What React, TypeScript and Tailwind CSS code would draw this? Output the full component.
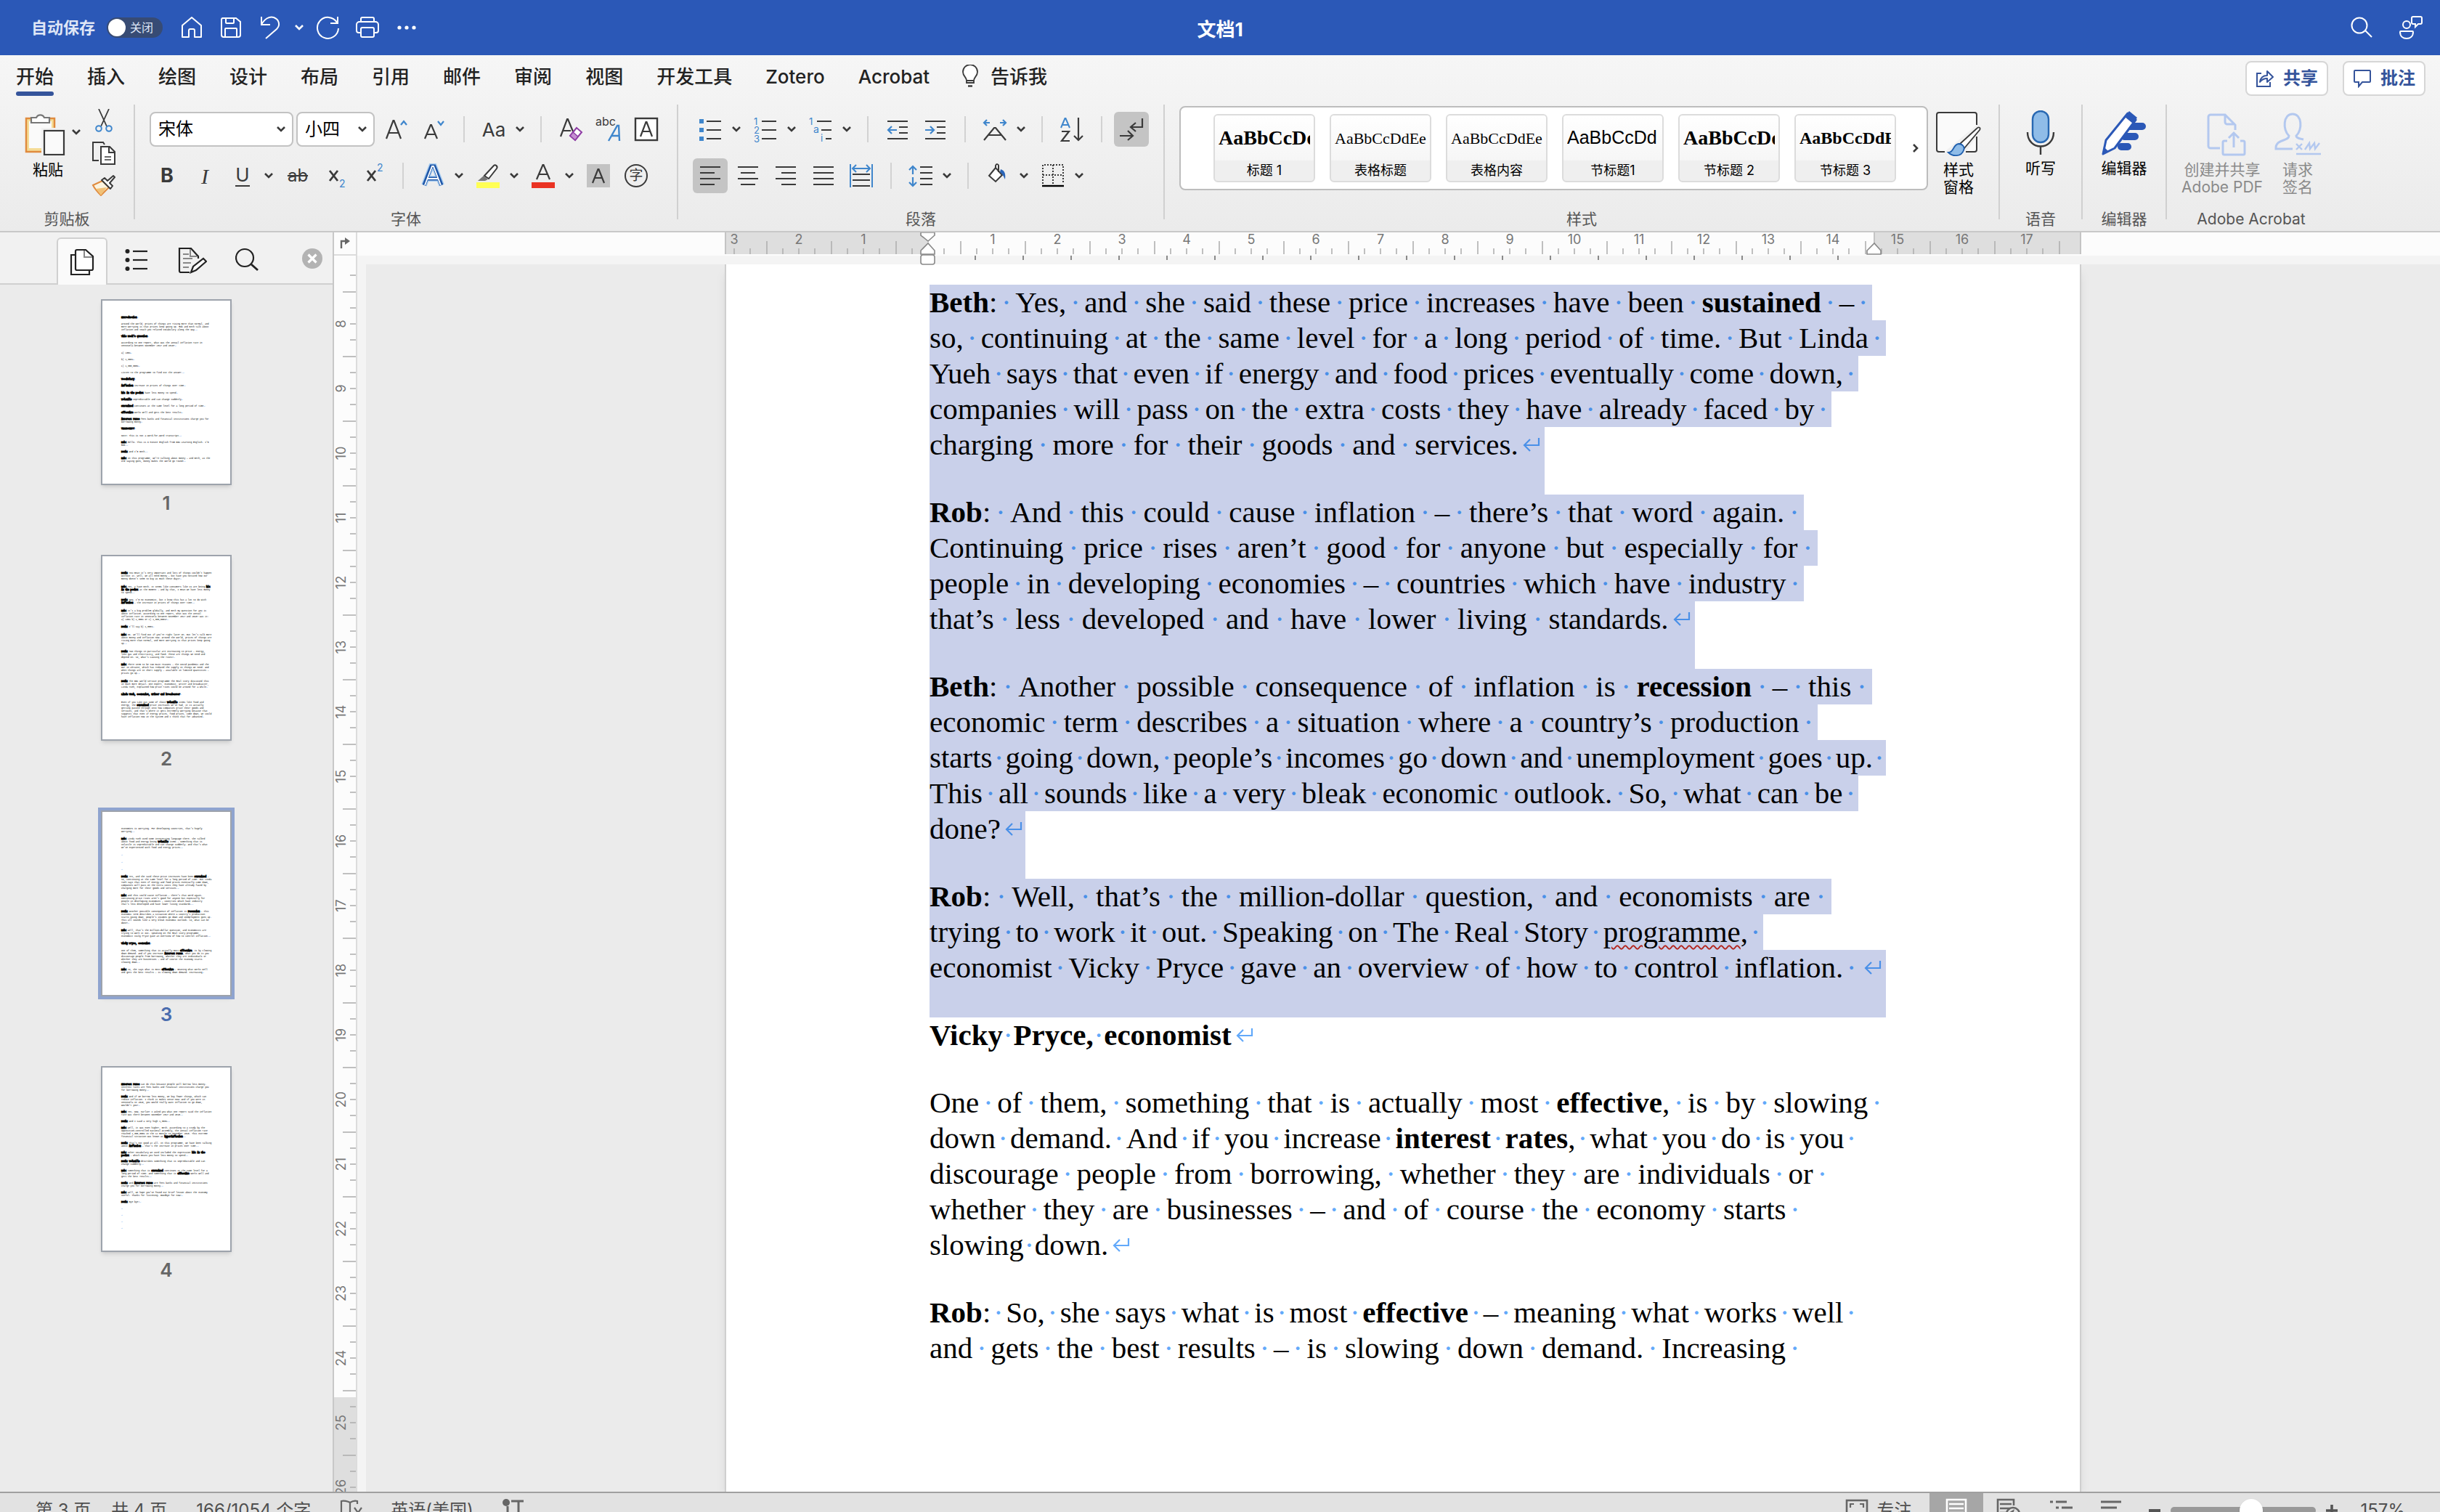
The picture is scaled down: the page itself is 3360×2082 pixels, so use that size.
import React, { ReactNode, useState } from "react";

const INK = "#3a3a3a";
const BLUE = "#3f86cc";

const Svg = ({ w, h, children }: { w: number; h: number; children: ReactNode }) => (
    <svg width={w} height={h} viewBox={`0 0 ${w} ${h}`} fill="none" className="shrink-0" aria-hidden="true">
        {children}
    </svg>
);

const Chevron = ({ color = INK }: { color?: string }) => (
    <Svg w={14} h={10}>
        <path d="M2 2l5 5 5-5" stroke={color} strokeWidth="2.6" />
    </Svg>
);

const Btn = ({ label, on = false, children }: { label: string; on?: boolean; children: ReactNode }) => (
    <div className="flex h-12 w-[52px] items-center justify-center">
        <button
            aria-label={label}
            className={
                on
                    ? "flex h-12 w-12 items-center justify-center rounded-md bg-[#c4c4c4]"
                    : "flex h-12 w-12 items-center justify-center"
            }
        >
            {children}
        </button>
    </div>
);

const Drop = ({ label }: { label: string }) => (
    <button aria-label={label} className="flex h-12 w-6 items-center pl-[3px]">
        <Chevron />
    </button>
);

const Sep = () => (
    <div className="flex h-12 w-[30px] items-center justify-center">
        <div className="h-9 w-0.5 bg-[#d2d2d2]" />
    </div>
);

const Divider = () => <div className="h-[158px] w-0.5 shrink-0 bg-[#d0d0d0]" />;

const Group = ({ name, className, children }: { name: string; className: string; children: ReactNode }) => (
    <section className={`flex shrink-0 flex-col ${className}`}>
        <div className="h-36">{children}</div>
        <div className="pt-0.5 text-center text-[21px] leading-6 text-[#555]">{name}</div>
    </section>
);

/* lines of different length, used by the alignment buttons */
const Bars = ({ rows }: { rows: [number, number][] }) => (
    <Svg w={28} h={36}>
        {rows.map(([x, w], i) => (
            <rect key={i} x={x} y={5 + i * 8} width={w} height="2" fill={INK} />
        ))}
    </Svg>
);

const TitleBar = () => (
    <header className="flex h-[76px] shrink-0 items-center bg-[#2b58b7] text-white">
        <div className="flex flex-1 items-center">
            <span className="ml-[43px] text-[22px] font-bold text-[#dfe6f6]">自动保存</span>
            <button
                role="switch"
                aria-checked="false"
                aria-label="自动保存"
                className="mr-[13px] ml-4 flex h-7 w-[77px] items-center gap-1.5 rounded-full bg-[#374b74] pl-0.5 text-base leading-7 text-[#dfe6f6]"
            >
                <span className="h-6 w-6 rounded-full bg-white" />
                关闭
            </button>
            <button aria-label="主页" className="flex w-[54px] justify-center">
                <Svg w={32} h={34}>
                    <path d="M3 14L16 3l13 11v16h-9v-9a2 2 0 0 0-2-2h-4a2 2 0 0 0-2 2v9H3z" stroke="#fff" strokeWidth="2" strokeLinejoin="round" />
                </Svg>
            </button>
            <button aria-label="保存" className="flex w-[54px] justify-center">
                <Svg w={32} h={32}>
                    <path d="M4 3h19l6 5v18a3 3 0 0 1-3 3H6a3 3 0 0 1-3-3V5a2 2 0 0 1 2-2zM9 3v6a1 1 0 0 0 1 1h9a1 1 0 0 0 1-1V3M8 29V18a1 1 0 0 1 1-1h14a1 1 0 0 1 1 1v11" stroke="#fff" strokeWidth="2" />
                </Svg>
            </button>
            <button aria-label="撤消" className="flex w-[54px] justify-center">
                <Svg w={32} h={34}>
                    <path d="M4 2v11h12M4 13C8 5 15 1 21 3c8 3 9 11 4 16L10 32" stroke="#fff" strokeWidth="2" />
                </Svg>
            </button>
            <button aria-label="撤消列表" className="flex w-[26px] justify-center">
                <Chevron color="#fff" />
            </button>
            <button aria-label="重复" className="flex w-[54px] justify-center">
                <Svg w={34} h={34}>
                    <path d="M30 2v9h-10M29 10A14.500 14.500 0 1 0 31 18" stroke="#fff" strokeWidth="2" />
                </Svg>
            </button>
            <button aria-label="打印" className="flex w-[54px] justify-center">
                <Svg w={34} h={32}>
                    <path d="M8 8V4a2 2 0 0 1 2-2h14a2 2 0 0 1 2 2v4M8 23H5a3 3 0 0 1-3-3v-8a4 4 0 0 1 4-4h22a4 4 0 0 1 4 4v8a3 3 0 0 1-3 3h-3M10 16h14a2 2 0 0 1 2 2v9a2 2 0 0 1-2 2H10a2 2 0 0 1-2-2v-9a2 2 0 0 1 2-2z" stroke="#fff" strokeWidth="2" />
                </Svg>
            </button>
            <button aria-label="更多" className="flex w-[54px] justify-center">
                <Svg w={28} h={8}>
                    <circle cx="4" cy="4" r="2.600" fill="#fff" />
                    <circle cx="14" cy="4" r="2.600" fill="#fff" />
                    <circle cx="24" cy="4" r="2.600" fill="#fff" />
                </Svg>
            </button>
        </div>
        <h1 className="pt-1 text-[26px] font-bold">文档1</h1>
        <div className="flex flex-1 items-center justify-end">
            <button aria-label="搜索" className="flex w-[68px] justify-center">
                <Svg w={30} h={30}>
                    <circle cx="12" cy="12" r="10.500" stroke="#fff" strokeWidth="2" />
                    <path d="M20 19l9 9" stroke="#fff" strokeWidth="2" />
                </Svg>
            </button>
            <button aria-label="状态" className="mr-1.5 flex w-[68px] justify-center">
                <Svg w={34} h={34}>
                    <circle cx="11" cy="13" r="5" stroke="#fff" strokeWidth="2" />
                    <path d="M3 22h16a1 1 0 0 1 1 1c0 6-4 9-9 9s-9-3-9-9a1 1 0 0 1 1-1zM20 2h10a2 2 0 0 1 2 2v6a2 2 0 0 1-2 2h-3l-4 4v-4h-3a2 2 0 0 1-2-2V4a2 2 0 0 1 2-2z" stroke="#fff" strokeWidth="2" />
                </Svg>
            </button>
        </div>
    </header>
);

const TABS = ["开始", "插入", "绘图", "设计", "布局", "引用", "邮件", "审阅", "视图", "开发工具", "Zotero", "Acrobat"];

const Tabs = () => {
    const [active, setActive] = useState("开始");
    return (
        <nav className="flex h-14 items-end pr-5 pl-[22px]">
            <div className="flex h-14 gap-[46px]">
                {TABS.map((tab) => (
                    <button key={tab} onClick={() => setActive(tab)} className="flex flex-col pt-2 text-[26px] font-medium text-[#222]">
                        <span className="flex flex-1 items-center">{tab}</span>
                        <span className={tab === active ? "h-1.5 w-full rounded-full bg-[#35549b]" : "h-1.5 w-full"} />
                    </button>
                ))}
            </div>
            <button className="ml-11 flex h-14 items-center gap-4 pt-0.5 text-[26px] font-medium text-[#222]">
                <Svg w={24} h={32}>
                    <path d="M7 22c0-5-5-6-5-12a10 10 0 0 1 20 0c0 6-5 7-5 12v3H7zM7 22h10" fill="#fff" stroke={INK} strokeWidth="1.800" />
                    <path d="M9 29.500h6" stroke={INK} strokeWidth="2.400" />
                </Svg>
                告诉我
            </button>
            <div className="ml-auto flex gap-5">
                <button className="flex h-12 w-[114px] items-center justify-center gap-3 rounded-lg border-2 border-[#d6d6d6] bg-white text-2xl font-bold text-[#35549b]">
                    <Svg w={26} h={26}>
                        <path d="M8 6H2v18h18v-6" stroke="#35549b" strokeWidth="2" />
                        <path d="M6 18c1-7 5-9 10-9V3l8 8-8 7v-5c-4 0-7 1-10 5z" stroke="#35549b" strokeWidth="2" strokeLinejoin="round" />
                    </Svg>
                    共享
                </button>
                <button className="flex h-12 w-[114px] items-center justify-center gap-3 rounded-lg border-2 border-[#d6d6d6] bg-white text-2xl font-bold text-[#35549b]">
                    <Svg w={26} h={26}>
                        <path d="M3 2h20a1 1 0 0 1 1 1v14a1 1 0 0 1-1 1H13l-5 6v-6H3a1 1 0 0 1-1-1V3a1 1 0 0 1 1-1z" stroke="#35549b" strokeWidth="2" />
                    </Svg>
                    批注
                </button>
            </div>
        </nav>
    );
};

const ClipboardGroup = () => (
    <Group name="剪贴板" className="w-[184px]">
        <div className="flex pt-1.5 pl-[34px]">
            <button className="flex w-16 flex-col items-center gap-1 pt-1 text-[21px] leading-8 text-black">
                <span className="w-full">
                    <Svg w={56} h={60}>
                        <rect x="2" y="9" width="39" height="46" fill="#f5dc96" stroke="#e08b3e" strokeWidth="2.500" />
                        <rect x="6" y="13" width="31" height="37" fill="#fafafa" />
                        <path d="M9 15V8h7a6 6 0 0 1 11 0h7v7z" fill="#fff" stroke="#777" strokeWidth="2.200" />
                        <rect x="23" y="22" width="32" height="38" fill="#f2f2f2" />
                        <rect x="27" y="26" width="27" height="33" fill="#fafafa" stroke={INK} strokeWidth="2.200" />
                    </Svg>
                </span>
                粘贴
            </button>
            <button aria-label="粘贴选项" className="flex h-16 w-7 items-center">
                <Chevron />
            </button>
            <div className="flex flex-col items-center gap-3">
                <button aria-label="剪切">
                    <Svg w={32} h={32}>
                        <path d="M9 0l11 24M23 0L12 24" stroke={INK} strokeWidth="1.800" />
                        <circle cx="9" cy="27" r="3.800" stroke={BLUE} strokeWidth="2" />
                        <circle cx="23" cy="27" r="3.800" stroke={BLUE} strokeWidth="2" />
                    </Svg>
                </button>
                <button aria-label="复制">
                    <Svg w={34} h={34}>
                        <path d="M10 27H2V2h14l2 3" stroke={INK} strokeWidth="2" />
                        <path d="M13 8h12l7 7v17H13zM24 8v8h8" fill="#fff" stroke={INK} strokeWidth="2" />
                        <path d="M18 22h9M18 26h9" stroke={INK} strokeWidth="1.600" />
                    </Svg>
                </button>
                <button aria-label="格式刷">
                    <Svg w={34} h={30}>
                        <path d="M2 15l13-6 9 9-11 11c-3-3-8-8-11-14z" fill="#fbf3df" stroke="#e08b3e" strokeWidth="2" />
                        <path d="M6 20l15-2-8 11z" fill="#f1c177" />
                        <path d="M14 8l4-3 4 4 8-7 2 2-7 8 4 4-3 4z" fill="#fff" stroke={INK} strokeWidth="2" strokeLinejoin="round" />
                    </Svg>
                </button>
            </div>
        </div>
    </Group>
);

const Combo = ({ label, value, className }: { label: string; value: string; className: string }) => (
    <div className={`flex h-12 items-center rounded-lg border-2 border-[#c2c2c2] bg-white ${className}`}>
        <select aria-label={label} defaultValue={value} className="h-full min-w-0 flex-1 appearance-none bg-transparent pl-2.5 text-2xl text-black">
            <option>{value}</option>
        </select>
        <span className="pr-2">
            <Chevron />
        </span>
    </div>
);

const FontGroup = () => (
    <Group name="字体" className="w-[746px]">
        <div className="flex flex-col gap-4 pt-2.5">
            <div className="flex pl-5">
                <Combo label="字体" value="宋体" className="mr-1 w-[198px]" />
                <Combo label="字号" value="小四" className="mr-1 w-[108px]" />
                <Btn label="增大字号">
                    <Svg w={32} h={36}>
                        <path d="M2 31L11.500 6h1L22 31M5.500 23h13" stroke={INK} strokeWidth="2.200" />
                        <path d="M22 12l4-5 4 5" stroke={BLUE} strokeWidth="2.200" />
                    </Svg>
                </Btn>
                <Btn label="减小字号">
                    <Svg w={32} h={36}>
                        <path d="M3 31l8-19h1l8 19M6 25h11" stroke={INK} strokeWidth="2.200" />
                        <path d="M21 7l4 5 4-5" stroke={BLUE} strokeWidth="2.200" />
                    </Svg>
                </Btn>
                <Sep />
                <Btn label="更改大小写">
                    <span className="text-[26px] text-[#3a3a3a]">Aa</span>
                </Btn>
                <Drop label="大小写选项" />
                <Sep />
                <Btn label="清除格式">
                    <Svg w={34} h={34}>
                        <path d="M3 27L12 3h1l7 17M6 19h11" stroke={INK} strokeWidth="2.200" />
                        <path d="M25 15l7 6-9 11-7-6z" fill="#fff" stroke="#8e3ca5" strokeWidth="2" />
                        <path d="M20 21l7 6-4 5-7-6z" fill="#c38fd0" stroke="#8e3ca5" strokeWidth="1.500" />
                    </Svg>
                </Btn>
                <Btn label="拼音指南">
                    <Svg w={36} h={36}>
                        <text x="0" y="13" fontSize="16" fill={INK} fontFamily="Inter">abc</text>
                        <path d="M18 34L30 13h2l1 21M22 27h11" stroke={BLUE} strokeWidth="2.400" />
                    </Svg>
                </Btn>
                <Btn label="字符边框">
                    <Svg w={34} h={34}>
                        <rect x="2" y="2" width="30" height="30" stroke={INK} strokeWidth="2.400" fill="#fff" />
                        <path d="M9 27L16.500 7h1L25 27M12 20h10" stroke={INK} strokeWidth="2.200" />
                    </Svg>
                </Btn>
            </div>
            <div className="flex pl-[18px]">
                <Btn label="加粗"><span className="text-[27px] font-bold text-[#3a3a3a]">B</span></Btn>
                <Btn label="倾斜"><span className="font-['Liberation_Serif',serif] text-[30px] italic text-[#3a3a3a]">I</span></Btn>
                <Btn label="下划线"><span className="border-b-2 border-[#3a3a3a] text-[26px] leading-7 text-[#3a3a3a]">U</span></Btn>
                <Drop label="下划线选项" />
                <Btn label="删除线"><span className="text-2xl text-[#3a3a3a] line-through">ab</span></Btn>
                <Btn label="下标">
                    <Svg w={28} h={34}>
                        <path d="M6 10l11 14M17 10L6 24" stroke={INK} strokeWidth="2.800" />
                        <text x="19" y="33" fontSize="14" fill={BLUE} fontFamily="Inter">2</text>
                    </Svg>
                </Btn>
                <Btn label="上标">
                    <Svg w={28} h={34}>
                        <path d="M6 10l11 14M17 10L6 24" stroke={INK} strokeWidth="2.800" />
                        <text x="19" y="11" fontSize="14" fill={BLUE} fontFamily="Inter">2</text>
                    </Svg>
                </Btn>
                <Sep />
                <Btn label="文本效果">
                    <Svg w={34} h={34}>
                        <path d="M5 30L15 4h4l10 26M10 21h14" stroke="#a9cdf0" strokeWidth="8" />
                        <path d="M5 30L15 4h4l10 26M10 21h14" stroke="#1f57a8" strokeWidth="5" />
                        <path d="M6 30L16 4h2l10 26M10 21h14" stroke="#fff" strokeWidth="1.800" />
                    </Svg>
                </Btn>
                <Drop label="效果选项" />
                <Btn label="突出显示">
                    <Svg w={34} h={34}>
                        <path d="M12 17L25 3c2-2 6 1 4 4L18 21z" fill="#fff" stroke={INK} strokeWidth="2" />
                        <path d="M11 17l6 5-4 2H3z" fill="#777" />
                        <rect x="1" y="26" width="32" height="8" fill="#ffff55" />
                    </Svg>
                </Btn>
                <Drop label="突出显示颜色" />
                <Btn label="字体颜色">
                    <Svg w={34} h={34}>
                        <path d="M8 22L16.500 2h1L26 22M11 15h12" stroke={INK} strokeWidth="2.200" />
                        <rect x="1" y="26" width="32" height="8" fill="#ea3323" />
                    </Svg>
                </Btn>
                <Drop label="颜色选项" />
                <Btn label="字符底纹">
                    <Svg w={32} h={32}>
                        <rect width="32" height="32" fill="#c3c3c3" />
                        <path d="M8 26L15.500 7h1L24 26M11 19h10" stroke={INK} strokeWidth="2.200" />
                    </Svg>
                </Btn>
                <Btn label="带圈字符">
                    <span className="flex h-8 w-8 items-center justify-center rounded-full border-2 border-[#3a3a3a] text-[19px] text-[#3a3a3a]">字</span>
                </Btn>
            </div>
        </div>
    </Group>
);

const ParagraphGroup = () => (
    <Group name="段落" className="w-[668px]">
        <div className="flex flex-col gap-4 pt-2.5 pl-[18px]">
            <div className="flex">
                <Btn label="项目符号">
                    <Svg w={32} h={34}>
                        {[3, 15, 27].map((y) => (
                            <g key={y}>
                                <rect x="1" y={y} width="6" height="6" fill={BLUE} />
                                <rect x="11" y={y + 2} width="20" height="2" fill={INK} />
                            </g>
                        ))}
                    </Svg>
                </Btn>
                <Drop label="符号选项" />
                <Btn label="编号">
                    <Svg w={32} h={36}>
                        {[1, 2, 3].map((n) => (
                            <g key={n}>
                                <text x="0" y={n * 12} fontSize="13" fill={BLUE} fontFamily="Inter">{n}</text>
                                <rect x="11" y={n * 12 - 6} width="20" height="2" fill={INK} />
                            </g>
                        ))}
                    </Svg>
                </Btn>
                <Drop label="编号选项" />
                <Btn label="多级列表">
                    <Svg w={32} h={36}>
                        <text x="0" y="12" fontSize="13" fill={BLUE} fontFamily="Inter">1</text>
                        <text x="6" y="23" fontSize="14" fill={BLUE} fontFamily="Inter">a</text>
                        <text x="16" y="35" fontSize="13" fill={BLUE} fontFamily="Inter">i</text>
                        <path d="M11 7h20M17 19h14M23 31h8" stroke={INK} strokeWidth="2" />
                    </Svg>
                </Btn>
                <Drop label="列表选项" />
                <Sep />
                <Btn label="减少缩进">
                    <Svg w={30} h={34}>
                        <path d="M1 6h28M17 14h12M17 22h12M1 30h28" stroke={INK} strokeWidth="2" />
                        <path d="M14 18H2M7 13l-5 5 5 5" stroke={BLUE} strokeWidth="2.200" />
                    </Svg>
                </Btn>
                <Btn label="增加缩进">
                    <Svg w={30} h={34}>
                        <path d="M1 6h28M17 14h12M17 22h12M1 30h28" stroke={INK} strokeWidth="2" />
                        <path d="M1 18h12M8 13l5 5-5 5" stroke={BLUE} strokeWidth="2.200" />
                    </Svg>
                </Btn>
                <Sep />
                <Btn label="字符缩放">
                    <Svg w={34} h={34}>
                        <path d="M10 8H2M6 4L2 8l4 4M24 8h8M28 4l4 4-4 4" stroke={BLUE} strokeWidth="2.200" />
                        <path d="M2 32l14-17h2l14 17M8 25h18" stroke={INK} strokeWidth="2.200" />
                    </Svg>
                </Btn>
                <Drop label="缩放选项" />
                <Sep />
                <Btn label="排序">
                    <Svg w={34} h={36}>
                        <path d="M2 16L7.500 3h1L14 16M4 12h8" stroke={BLUE} strokeWidth="2" />
                        <path d="M3 21h10L3 34h11" stroke={INK} strokeWidth="2.200" />
                        <path d="M26 2v31M20 27l6 6 6-6" stroke={INK} strokeWidth="2.200" />
                    </Svg>
                </Btn>
                <Sep />
                <Btn label="显示编辑标记" on>
                    <Svg w={34} h={32}>
                        <path d="M32 1v12H17M23 7l-7 6 7 6M1 25h17M12 18l7 7-7 6" stroke={INK} strokeWidth="2.200" />
                    </Svg>
                </Btn>
            </div>
            <div className="flex">
                <Btn label="左对齐" on><Bars rows={[[0, 28], [0, 20], [0, 28], [0, 20]]} /></Btn>
                <Btn label="居中"><Bars rows={[[0, 28], [4, 20], [0, 28], [4, 20]]} /></Btn>
                <Btn label="右对齐"><Bars rows={[[0, 28], [8, 20], [0, 28], [8, 20]]} /></Btn>
                <Btn label="两端对齐"><Bars rows={[[0, 28], [0, 28], [0, 28], [0, 28]]} /></Btn>
                <Btn label="分散对齐">
                    <Svg w={34} h={34}>
                        <path d="M2 1v32M32 1v32M6 7h22M10 2L5 7l5 5M24 2l5 5-5 5" stroke={BLUE} strokeWidth="2" />
                        <path d="M5 15h24M5 23h24M5 31h24" stroke={INK} strokeWidth="2" />
                    </Svg>
                </Btn>
                <Sep />
                <Btn label="行距">
                    <Svg w={34} h={34}>
                        <path d="M6 15V4M1 9l5-5 5 5M6 19v11M1 26l5 5 5-5" stroke={BLUE} strokeWidth="2.200" />
                        <path d="M16 5h17M16 13h17M16 21h17M16 29h17" stroke={INK} strokeWidth="2" />
                    </Svg>
                </Btn>
                <Drop label="行距选项" />
                <Sep />
                <Btn label="底纹">
                    <Svg w={30} h={34}>
                        <path d="M12 6L3 17l9 8 9-9zM12 6V3c1-3 4-2 4 0v9" fill="#fff" stroke={INK} strokeWidth="2" />
                        <path d="M19 8c6 2 7 7 6 14-2-4-3-7-7-10z" fill="#2b65b8" />
                    </Svg>
                </Btn>
                <Drop label="底纹颜色" />
                <Btn label="边框">
                    <Svg w={32} h={34}>
                        <path d="M2 28V2h28v26M16 2v26M2 16h28" stroke={INK} strokeWidth="2" strokeDasharray="2 2" />
                        <path d="M1 31h30" stroke="#000" strokeWidth="2.400" />
                    </Svg>
                </Btn>
                <Drop label="边框选项" />
            </div>
        </div>
    </Group>
);

const STYLES = [
    { name: "标题 1", sample: "AaBbCcDdEe", font: "font-['Liberation_Serif',serif] text-[28px] font-bold" },
    { name: "表格标题", sample: "AaBbCcDdEe", font: "font-['Liberation_Serif',serif] text-[22px]" },
    { name: "表格内容", sample: "AaBbCcDdEe", font: "font-['Liberation_Serif',serif] text-[22px]" },
    { name: "节标题1", sample: "AaBbCcDd", font: "font-['Liberation_Sans',sans-serif] text-[25px]" },
    { name: "节标题 2", sample: "AaBbCcDdEe", font: "font-['Liberation_Serif',serif] text-[28px] font-bold" },
    { name: "节标题 3", sample: "AaBbCcDdEe", font: "font-['Liberation_Serif',serif] text-2xl font-bold" },
];

const StylesGroup = () => (
    <Group name="样式" className="w-[1148px]">
        <div className="flex pl-5">
            <div className="mt-0.5 flex h-[116px] items-center gap-5 rounded-lg border-2 border-[#bdbdbd] bg-white pr-2 pl-[45px]">
                {STYLES.map((s) => (
                    <button key={s.name} className="flex h-[94px] w-[140px] flex-col overflow-hidden rounded-md border-2 border-[#dcdcdc] bg-[#efefef] text-black">
                        <span className="flex h-[62px] w-full items-center bg-linear-to-b from-white to-[#f6f6f6] px-[5px]">
                            <span className={`w-full overflow-hidden text-left whitespace-nowrap ${s.font}`}>{s.sample}</span>
                        </span>
                        <span className="w-full text-center text-lg leading-7">{s.name}</span>
                    </button>
                ))}
                <button aria-label="更多样式">
                    <Svg w={14} h={16}>
                        <path d="M4 3l5 5-5 5" stroke={INK} strokeWidth="2.600" />
                    </Svg>
                </button>
            </div>
            <button className="ml-2.5 flex w-16 flex-col items-center gap-1.5 pt-2.5 text-[21px] leading-6 text-black">
                <Svg w={62} h={62}>
                    <path d="M12 55H4a3 3 0 0 1-3-3V4a3 3 0 0 1 3-3h49a3 3 0 0 1 3 3v14M56 34v18a3 3 0 0 1-3 3H41" fill="#fafafa" stroke={INK} strokeWidth="2" />
                    <path d="M32 45L56 23c3-3 6-1 4 2L39 50z" fill="#fff" stroke={INK} strokeWidth="1.800" />
                    <path d="M17 56c8 0 6-11 14-12 6 0 9 5 7 9-3 9-15 9-21 3z" fill="#8fbce8" stroke="#1f5fae" strokeWidth="1.800" />
                </Svg>
                <span>样式<br />窗格</span>
            </button>
        </div>
    </Group>
);

const BIG_BTN = "flex flex-col items-center gap-1.5 pt-2 text-[21px] leading-6 text-black";
const DIM_BTN = "flex flex-col items-center gap-1.5 pt-2.5 text-[21px] leading-6 text-[#8a8a8a]";

const ToolGroups = () => (
    <>
        <Group name="语音" className="w-28">
            <button className={`${BIG_BTN} w-full`}>
                <Svg w={40} h={62}>
                    <rect x="9" y="1" width="22" height="43" rx="11" fill="#8fbce8" stroke="#2868b2" strokeWidth="2.400" />
                    <path d="M2 30c0 26 36 26 36 0M20 50v11" stroke={INK} strokeWidth="2.400" />
                </Svg>
                听写
            </button>
        </Group>
        <Divider />
        <Group name="编辑器" className="w-[114px]">
            <button className={`${BIG_BTN} w-full`}>
                <Svg w={64} h={62}>
                    <path d="M36 22h21M32 36h15M28 50h9" stroke="#2b58b7" strokeWidth="10" strokeLinecap="round" />
                    <path d="M3 60l4-19L37 4l11 9-29 39z" fill="#fff" stroke="#2b58b7" strokeWidth="3" strokeLinejoin="round" />
                    <path d="M33 9l6-8 11 9-6 8zM2 61l2-11 6 6z" fill="#2b58b7" />
                </Svg>
                编辑器
            </button>
        </Group>
        <Divider />
        <Group name="Adobe Acrobat" className="w-[232px]">
            <div className="flex justify-center gap-4">
                <button className={DIM_BTN}>
                    <span className="pl-3">
                        <Svg w={54} h={62}>
                            <path d="M18 50H5a3 3 0 0 1-3-3V7a3 3 0 0 1 3-3h20l14 14v7M25 4v10a3 3 0 0 0 3 3h11" stroke="#b3c8ef" strokeWidth="3" />
                            <path d="M28 40h-4a2 2 0 0 0-2 2v15a2 2 0 0 0 2 2h26a2 2 0 0 0 2-2V42a2 2 0 0 0-2-2h-4M37 49V30M30 36l7-7 7 7" stroke="#b3c8ef" strokeWidth="3" />
                        </Svg>
                    </span>
                    <span>创建并共享<br />Adobe PDF</span>
                </button>
                <button className={DIM_BTN}>
                    <Svg w={64} h={62}>
                        <path d="M25 51H2c-1-14 18-10 18-18-9-8-8-30 5-30s14 22 5 30c0 3 5 4 10 5" stroke="#b3c8ef" strokeWidth="3" />
                        <path d="M30 44l8 8M38 44l-8 8M42 52l6-9 1 8 6-8 1 8 6-8M30 58h34" stroke="#b3c8ef" strokeWidth="2.400" />
                    </Svg>
                    <span>请求<br />签名</span>
                </button>
            </div>
        </Group>
    </>
);

/* thumbnails: paragraphs of lines, *bold*, an empty line is a lone paragraph mark */
const PAGES: string[][][] = [
    [
        ["*Introduction*"],
        ["Around the world, prices of things are rising more than normal, and", "more worrying is that prices keep going up. Rob and Beth talk about", "inflation and teach you related vocabulary along the way."],
        ["*This week's question*"],
        ["According to one report, what was the annual inflation rate in", "Venezuela between November 2017 and 2018?"],
        ["a) 130%"],
        ["b) 1,300%"],
        ["c) 1,300,000%"],
        ["Listen to the programme to find out the answer."],
        ["*Vocabulary*"],
        ["*inflation* increase in prices of things over time"],
        ["*hit in the pocket* have less money to spend"],
        ["*volatile* unpredictable and can change suddenly"],
        ["*sustained* continues at the same level for a long period of time"],
        ["*effective* works well and gets the best results"],
        ["*interest rates* fees banks and financial institutions charge you for", "borrowing money"],
        ["*TRANSCRIPT*"],
        ["Note: This is not a word-for-word transcript."],
        ["*Rob:* Hello. This is 6 Minute English from BBC Learning English. I'm", "Rob."],
        ["*Beth:* And I'm Beth."],
        ["*Rob:* In this programme, we're talking about money – and Beth, as the", "old saying goes, money makes the world go round!"],
    ],
    [
        ["*Beth:* You mean it's very important and lots of things couldn't happen", "without it. Well, we all need money – but have you noticed how our", "money doesn't seem to buy as much these days?"],
        ["*Rob:* Yes, I have Beth. It seems like consumers like us are being *hit*", "*in the pocket* at the moment – and by that, I mean we have less money", "to spend."],
        ["*Beth:* Now, I'm no economist, but I know this has a lot to do with", "*inflation* – the increase in prices of things over time."],
        ["*Rob:* It's a big problem globally, and Beth my question for you is", "about inflation. According to one report, what was the annual", "inflation rate in Venezuela between November 2017 and 2018? Was it:", "a) 130% b) 1,300% or c) 1,300,000%?"],
        ["*Beth:* I'll say b) 1,300%"],
        ["*Rob:* OK. We'll find out if you're right later on. But let's talk more", "about money and inflation now. Around the world, prices of things are", "rising more than normal, and more worrying is that prices keep going", "up."],
        ["*Beth:* Two things in particular are increasing in price – energy,", "like gas and electricity, and food. These are things we need and", "depend on. So, what's causing the rises?"],
        ["*Rob:* There seem to be two main reasons – the Covid pandemic and the", "war in Ukraine, which has reduced the supply in things we need. And", "when things are in short supply – available in limited quantities –", "prices go up."],
        ["*Beth:* The BBC World Service programme The Real Story discussed this", "in much more detail. One expert, economist, writer and broadcaster,", "Linda Yueh, explained how price rises could be around for a while"],
        ["*Linda Yueh, economist, writer and broadcaster*"],
        ["Even if you take out some of those *volatile* items like food and", "energy, the *sustained* price increases we've had, it is actually", "getting passed through into how companies price their goods and", "services, and that's where it gets extremely worrying because that", "suggests that even if energy prices, food prices, come down, we could", "have inflation now in the system and I think that for advanced"],
    ],
    [
        ["economies is worrying. For developing countries, that's hugely", "worrying."],
        ["*Rob:* Linda Yueh used some interesting language there. She talked", "about food and energy being *volatile* items – something that is", "volatile is unpredictable and can change suddenly. And that's what", "we've experienced with food and energy prices."],
        [""],
        [""],
        [""],
        ["*Beth:* Yes, and she said these price increases have been *sustained* –", "so, continuing at the same level for a long period of time. But Linda", "Yueh says that even if energy and food prices eventually come down,", "companies will pass on the extra costs they have already faced by", "charging more for their goods and services."],
        ["*Rob:* And this could cause inflation – there's that word again.", "Continuing price rises aren't good for anyone but especially for", "people in developing economies – countries which have industry", "that's less developed and have lower living standards."],
        ["*Beth:* Another possible consequence of inflation is *recession* – this", "economic term describes a situation where a country's production", "starts going down, people's incomes go down and unemployment goes up.", "This all sounds like a very bleak economic outlook. So, what can be", "done?"],
        ["*Rob:* Well, that's the million-dollar question, and economists are", "trying to work it out. Speaking on The Real Story programme,", "economist Vicky Pryce gave an overview of how to control inflation."],
        ["*Vicky Pryce, economist*"],
        ["One of them, something that is actually most *effective*, is by slowing", "down demand. And if you increase *interest rates*, what you do is you", "discourage people from borrowing, whether they are individuals or", "whether they are businesses – and of course the economy starts", "slowing down."],
        ["*Rob:* So, she says what is most *effective* – meaning what works well", "and gets the best results – is slowing down demand. Increasing"],
    ],
    [
        ["*Interest rates* can do this because people will borrow less money.", "Interest rates are fees banks and financial institutions charge you", "for borrowing money."],
        ["*Beth:* And if we borrow less money, we buy fewer things, which can", "reduce inflation. I think it makes sense now! And if you were in", "Venezuela in 2018, you would really want inflation to go down,", "wouldn't you?"],
        ["*Rob:* Yes. Now, earlier I asked you what one report said the inflation", "rate was there between November 2017 and 2018."],
        ["*Beth:* And I said a very high 1,300%."],
        ["*Rob:* Well, it was even higher, Beth. According to a study by the", "opposition-controlled National Assembly, the annual inflation rate", "reached 1,300,000% in the 12 months to November 2018. This extreme", "financial situation was known as *hyperinflation*."],
        ["*Beth:* That's not good at all. In this programme, we have been talking", "about *inflation* – that's the increase in prices over time."],
        ["*Rob:* Other vocabulary we used included the expression *hit in the*", "*pocket* – which means you have less money to spend."],
        ["*Beth:* *Volatile* describes something that is unpredictable and can", "change suddenly."],
        ["*Rob:* Something that is *sustained* continues at the same level for a", "long period of time. And something that is *effective* works well and", "gets the best results."],
        ["*Beth:* And *interest rates* are fees banks and financial institutions", "charge you for borrowing money."],
        ["*Rob:* Well, we hope you've found our brief lesson about the economy", "useful. Thanks for listening. Goodbye for now!"],
        ["*Beth:* Bye bye!"],
        [""],
        [""],
        [""],
        [""],
    ],
];

const rich = (text: string) =>
    text.split(/(\*[^*]+\*|~[^~]+~)/).map((part, i) => {
        if (part.startsWith("*")) return <b key={i}>{part.slice(1, -1)}</b>;
        if (part.startsWith("~"))
            return (
                <span key={i} className="underline decoration-[#b3261e] decoration-wavy decoration-2 underline-offset-4">
                    {part.slice(1, -1)}
                </span>
            );
        return part;
    });

const THUMB =
    "flex h-64 w-[180px] flex-col justify-between border-2 border-[#9da3ac] bg-white pt-[22px] pr-2 pb-7 pl-[26px] text-left font-['Liberation_Mono',monospace] text-[3px] leading-[4px] text-black shadow-md [&_b]:[-webkit-text-stroke:1px_#000]";

const Sidebar = () => {
    const [current, setCurrent] = useState(3);
    return (
        <aside className="flex w-[460px] shrink-0 flex-col border-r-2 border-[#c8c8c8] bg-[#ebebeb]">
            <div className="flex h-[72px] items-end border-b-2 border-[#d0d0d0] bg-[#f1f1f1] pl-[78px]">
                <button aria-label="缩略图" className="-mb-0.5 flex h-[65px] w-[70px] items-center justify-center rounded-t-md border-2 border-b-0 border-[#d0d0d0] bg-[#fafafa]">
                    <Svg w={34} h={38}>
                        <path d="M8 9H2v27h25v-6" stroke="#222" strokeWidth="2.200" />
                        <path d="M8 4a2 2 0 0 1 2-2h12l10 9v17a2 2 0 0 1-2 2H10a2 2 0 0 1-2-2z" fill="#fff" stroke="#222" strokeWidth="2.200" />
                        <path d="M20 3v9h11" stroke="#888" strokeWidth="2" />
                    </Svg>
                </button>
                <button aria-label="导航窗格" className="flex h-[65px] w-20 items-center justify-center">
                    <Svg w={32} h={34}>
                        {[5, 17, 29].map((y) => (
                            <g key={y}>
                                <circle cx="3.500" cy={y} r="3" fill="#222" />
                                <path d={`M11 ${y}h20`} stroke="#222" strokeWidth="2.200" />
                            </g>
                        ))}
                    </Svg>
                </button>
                <button aria-label="审阅窗格" className="flex h-[65px] w-[74px] items-center justify-center">
                    <Svg w={40} h={38}>
                        <path d="M16 36H4a2 2 0 0 1-2-2V3h16l10 11v3" stroke="#222" strokeWidth="2.200" />
                        <path d="M7 11h8M7 17h13M7 23h11M7 29h8M17 4v10h9" stroke="#888" strokeWidth="2" />
                        <path d="M18 36l3-8 14-11 4 4-14 12z" fill="#fff" stroke="#222" strokeWidth="2.200" />
                    </Svg>
                </button>
                <button aria-label="查找" className="flex h-[65px] w-[76px] items-center justify-center">
                    <Svg w={32} h={34}>
                        <circle cx="13" cy="14" r="12" stroke="#222" strokeWidth="2.200" />
                        <path d="M22 23l9 8" stroke="#222" strokeWidth="2.800" />
                    </Svg>
                </button>
                <button aria-label="关闭窗格" className="mr-3.5 mb-5 ml-auto">
                    <Svg w={28} h={28}>
                        <circle cx="14" cy="14" r="14" fill="#b3b3b3" />
                        <path d="M8.500 8.500l11 11M19.500 8.500l-11 11" stroke="#fff" strokeWidth="3.200" />
                    </Svg>
                </button>
            </div>
            <div className="flex flex-col items-center gap-[55px] overflow-hidden pt-5">
                {PAGES.map((page, i) => (
                    <button key={i} onClick={() => setCurrent(i + 1)} className="flex flex-col items-center gap-[9px]">
                        <span className={current === i + 1 ? `${THUMB} ring-4 ring-[#8fa4cf]` : THUMB}>
                            {page.map((para, p) => (
                                <span key={p} className="block">
                                    {para.map((line, l) => (
                                        <span key={l} className="block whitespace-nowrap">
                                            {rich(line)}
                                            {l === para.length - 1 && <span className="text-[#5a9fee]">↵</span>}
                                        </span>
                                    ))}
                                </span>
                            ))}
                        </span>
                        <span
                            className={
                                current === i + 1
                                    ? "text-[26px] leading-8 font-semibold text-[#4a6cae]"
                                    : "text-[26px] leading-8 font-semibold text-[#666]"
                            }
                        >
                            {i + 1}
                        </span>
                    </button>
                ))}
            </div>
        </aside>
    );
};

const CM = 89;

const range = (from: number, to: number) => Array.from({ length: to - from + 1 }, (_, i) => from + i);

const HorizontalRuler = () => (
    <svg width="1868" height="46" className="shrink-0" aria-hidden="true">
        <rect width="281" height="30" fill="#dedede" />
        <rect x="1583" width="285" height="30" fill="#dedede" />
        <path d="M1583 0v30M1867 0v30M1 0v30" stroke="#c4c4c4" strokeWidth="2" />
        {range(-12, 70).map((q) => {
            const x = 280 + Math.round((q * CM) / 4);
            return q === 0 ? null : (
                <path key={q} d={q % 4 === 2 || q % 4 === -2 ? `M${x} 12v18` : `M${x} 22v8`} stroke="#b0b0b0" strokeWidth="1.600" />
            );
        })}
        {range(-3, 17).map((n) =>
            n === 0 ? null : (
                <text key={n} x={280 + n * CM} y="16" fontSize="18" textAnchor="middle" fill="#777" fontFamily="Inter">
                    {Math.abs(n)}
                </text>
            )
        )}
        {range(1, 19).map((n) => (
            <path key={n} d={`M${279 + n * 66} 32v6`} stroke="#8a8a8a" strokeWidth="2" />
        ))}
        <path d="M270 0h19v4l-9 8-10-8z" fill="#fff" stroke="#888" strokeWidth="1.600" />
        <path d="M270 30v-5l10-10 9 10v5z" fill="#fff" stroke="#888" strokeWidth="1.600" />
        <rect x="270" y="31" width="19" height="13" rx="3" fill="#fff" stroke="#888" strokeWidth="1.600" />
        <path d="M1573 30v-5l10-10 9 10v5z" fill="#fff" stroke="#888" strokeWidth="1.600" />
    </svg>
);

const VerticalRuler = () => (
    <svg className="h-full w-8 shrink-0 bg-[#fcfcfc]" aria-hidden="true">
        <rect y="1572" width="32" height="400" fill="#dedede" />
        <path d="M31 0v1800" stroke="#dcdcdc" strokeWidth="2" />
        {range(29, 104).map((q) => {
            const y = Math.round((q * CM) / 4) - 618;
            return <path key={q} d={q % 4 === 2 ? `M12 ${y}h18` : `M22 ${y}h8`} stroke="#b0b0b0" strokeWidth="1.600" />;
        })}
        {range(8, 26).map((n) => {
            const y = n * CM - 618;
            return (
                <text key={n} x="16" y={y} fontSize="18" textAnchor="middle" fill="#777" fontFamily="Inter" transform={`rotate(-90 16 ${y})`}>
                    {n}
                </text>
            );
        })}
    </svg>
);

/* body text; a column is one half-width character, a full line has 70 of them */
const COLUMNS = 70;

const BODY: { selected?: boolean; open?: boolean; lines: string[] }[] = [
    {
        selected: true,
        lines: [
            "*Beth*: Yes, and she said these price increases have been *sustained* – ",
            "so, continuing at the same level for a long period of time. But Linda ",
            "Yueh says that even if energy and food prices eventually come down, ",
            "companies will pass on the extra costs they have already faced by ",
            "charging more for their goods and services.",
        ],
    },
    {
        selected: true,
        lines: [
            "*Rob*: And this could cause inflation – there’s that word again. ",
            "Continuing price rises aren’t good for anyone but especially for ",
            "people in developing economies – countries which have industry ",
            "that’s less developed and have lower living standards.",
        ],
    },
    {
        selected: true,
        lines: [
            "*Beth*: Another possible consequence of inflation is *recession* – this ",
            "economic term describes a situation where a country’s production ",
            "starts going down, people’s incomes go down and unemployment goes up. ",
            "This all sounds like a very bleak economic outlook. So, what can be ",
            "done?",
        ],
    },
    {
        selected: true,
        lines: [
            "*Rob*: Well, that’s the million-dollar question, and economists are ",
            "trying to work it out. Speaking on The Real Story ~programme~, ",
            "economist Vicky Pryce gave an overview of how to control inflation. ",
        ],
    },
    { lines: ["*Vicky* *Pryce,* *economist*"] },
    {
        lines: [
            "One of them, something that is actually most *effective*, is by slowing ",
            "down demand. And if you increase *interest* *rates*, what you do is you ",
            "discourage people from borrowing, whether they are individuals or ",
            "whether they are businesses – and of course the economy starts ",
            "slowing down.",
        ],
    },
    {
        open: true,
        lines: [
            "*Rob*: So, she says what is most *effective* – meaning what works well ",
            "and gets the best results – is slowing down demand. Increasing ",
        ],
    },
];

const cols = (word: string) => (word === "–" ? 2 : word.replace(/[*~]/g, "").length);

const Line = ({ text, last, selected }: { text: string; last: boolean; selected: boolean }) => {
    const words = text.split(" ");
    const total = words.reduce((n, word) => n + cols(word), 0) + words.length - 1 + (last ? 2 : 0);
    const width = `${(Math.min(total, COLUMNS) / COLUMNS) * 100}%`;
    return (
        <div
            className={selected ? (last ? "flex bg-[#c9d0ea] pb-11" : "flex bg-[#c9d0ea]") : last ? "flex pb-11" : "flex"}
            style={{ width }}
        >
            {words.map((word, i) => (
                <React.Fragment key={i}>
                    {word && <span className="shrink-0 whitespace-nowrap">{rich(word)}</span>}
                    {i < words.length - 1 && (
                        <span className={selected ? "flex min-w-0 flex-1 justify-center text-[#4a90e8]" : "flex min-w-0 flex-1 justify-center text-[#62a9fa]"}>
                            ·
                        </span>
                    )}
                </React.Fragment>
            ))}
            {last && (
                <span className="flex w-9 shrink-0 items-center pl-1.5">
                    <Svg w={24} h={22}>
                        <path d="M22 1v10H3M10 3l-8 8 8 8" stroke={selected ? "#4a90e8" : "#62a9fa"} strokeWidth="2.200" />
                    </Svg>
                </span>
            )}
        </div>
    );
};

const Editor = () => (
    <main className="flex min-w-0 flex-1 flex-col">
        <div className="flex h-8 shrink-0 bg-[#fcfcfc]">
            <div className="flex w-8 items-center justify-center border-r-2 border-b-2 border-[#dcdcdc]">
                <Svg w={16} h={18}>
                    <path d="M3 16V6h6" stroke="#666" strokeWidth="2.400" />
                    <path d="M8 1l7 5-7 5z" fill="#666" />
                </Svg>
            </div>
            <div className="relative z-10 flex h-[46px] min-w-0 flex-1 justify-center pl-3">
                <HorizontalRuler />
            </div>
        </div>
        <div className="flex min-h-0 flex-1">
            <VerticalRuler />
            <div className="w-3 shrink-0 bg-[#f4f4f4]" />
            <div className="flex min-w-0 flex-1 flex-col bg-[#ebebeb]">
                <div className="h-3 shrink-0 bg-[#f4f4f4]" />
                <div className="flex min-h-0 flex-1 justify-center overflow-hidden">
                    <article className="w-[1868px] border-x-2 border-[#cfcfcf] bg-white pt-7 pl-[280px] font-['Liberation_Serif','Noto_Sans_CJK_SC',serif] text-[41px] leading-[49px] text-black shadow-lg">
                        <div className="w-[1317px]">
                            {BODY.map((para, p) =>
                                para.lines.map((line, l) => (
                                    <Line key={`${p}-${l}`} text={line} selected={!!para.selected} last={!para.open && l === para.lines.length - 1} />
                                ))
                            )}
                        </div>
                    </article>
                </div>
            </div>
        </div>
    </main>
);

const StatusBar = () => (
    <footer className="h-7 shrink-0 overflow-hidden border-t-2 border-[#a0a0a0] bg-[#e2e2e2]">
        <div className="flex h-12 items-center pr-12 pl-[49px] text-2xl text-[#4f4f4f]">
            <span className="mr-7">第 3 页</span>
            <span className="mr-10">共 4 页</span>
            <button className="mr-10">166/1054 个字</button>
            <button aria-label="拼写检查" className="mr-9">
                <Svg w={34} h={32}>
                    <path d="M14 28V5c-3-2-9-3-12-2v24h10M14 5c3-2 7-3 10-2v4M20 12l10 14M30 12L20 26" stroke="#666" strokeWidth="2.200" />
                </Svg>
            </button>
            <button className="mr-10">英语(美国)</button>
            <button aria-label="修订">
                <Svg w={32} h={36}>
                    <circle cx="5" cy="7" r="5" fill="#666" />
                    <path d="M7 12v20M12 5h17M22 5v26" stroke="#666" strokeWidth="3" />
                </Svg>
            </button>
            <div className="ml-auto flex items-center">
                <button className="mr-6 flex items-center gap-3">
                    <Svg w={32} h={32}>
                        <rect x="2" y="2" width="28" height="28" stroke="#666" strokeWidth="2.600" />
                        <path d="M7 12V7h5M20 7h5v5M7 20v5h5M25 20v5h-5" stroke="#666" strokeWidth="2.200" />
                    </Svg>
                    专注
                </button>
                <button aria-label="页面视图" className="flex h-12 w-[74px] items-center justify-center bg-[#a6a6a6]">
                    <Svg w={30} h={34}>
                        <path d="M2 2h26v30H2zM5 8h20M5 14h20M5 20h20M5 26h20" stroke="#fff" strokeWidth="2.600" />
                    </Svg>
                </button>
                <button aria-label="Web 版式" className="flex w-[70px] justify-center">
                    <Svg w={34} h={34}>
                        <path d="M12 32H2V2h22v8M5 8h16M5 14h14M5 20h9" stroke="#666" strokeWidth="2.600" />
                        <circle cx="23" cy="22" r="9" stroke="#666" strokeWidth="2.600" />
                        <path d="M17 20l8-5-2 7 5 5z" fill="#666" />
                    </Svg>
                </button>
                <button aria-label="大纲" className="flex w-[74px] justify-center">
                    <Svg w={32} h={32}>
                        <path d="M1 4h4M9 4h15M9 12h4M17 12h15M9 20h4M17 20h15" stroke="#666" strokeWidth="3" />
                    </Svg>
                </button>
                <button aria-label="草稿" className="mr-5 flex w-16 justify-center">
                    <Svg w={28} h={32}>
                        <path d="M0 4h28M0 12h22M0 20h28" stroke="#666" strokeWidth="3" />
                    </Svg>
                </button>
                <button aria-label="缩小" className="mr-3.5">
                    <Svg w={16} h={16}><path d="M0 8h16" stroke="#555" strokeWidth="4" /></Svg>
                </button>
                <input
                    type="range"
                    aria-label="显示比例"
                    defaultValue={57}
                    className="h-2.5 w-[200px] appearance-none rounded-full bg-[#999] [&::-webkit-slider-thumb]:h-8 [&::-webkit-slider-thumb]:w-8 [&::-webkit-slider-thumb]:appearance-none [&::-webkit-slider-thumb]:rounded-full [&::-webkit-slider-thumb]:bg-white [&::-webkit-slider-thumb]:shadow"
                />
                <button aria-label="放大" className="mr-8 ml-3.5">
                    <Svg w={16} h={16}><path d="M0 8h16M8 0v16" stroke="#555" strokeWidth="3.600" /></Svg>
                </button>
                <span>157%</span>
            </div>
        </div>
    </footer>
);

const App = () => (
    <div className="flex h-screen flex-col overflow-hidden bg-[#ebebeb] font-['Inter','Noto_Sans_CJK_SC',sans-serif]">
        <TitleBar />
        <div className="shrink-0 border-b-2 border-[#c8c8c8] bg-linear-to-b from-[#f6f6f6] to-[#ebebeb]">
            <Tabs />
            <div className="flex h-[186px] pt-3">
                <ClipboardGroup />
                <Divider />
                <FontGroup />
                <Divider />
                <ParagraphGroup />
                <Divider />
                <StylesGroup />
                <Divider />
                <ToolGroups />
            </div>
        </div>
        <div className="flex min-h-0 flex-1">
            <Sidebar />
            <Editor />
        </div>
        <StatusBar />
    </div>
);

export default App;
